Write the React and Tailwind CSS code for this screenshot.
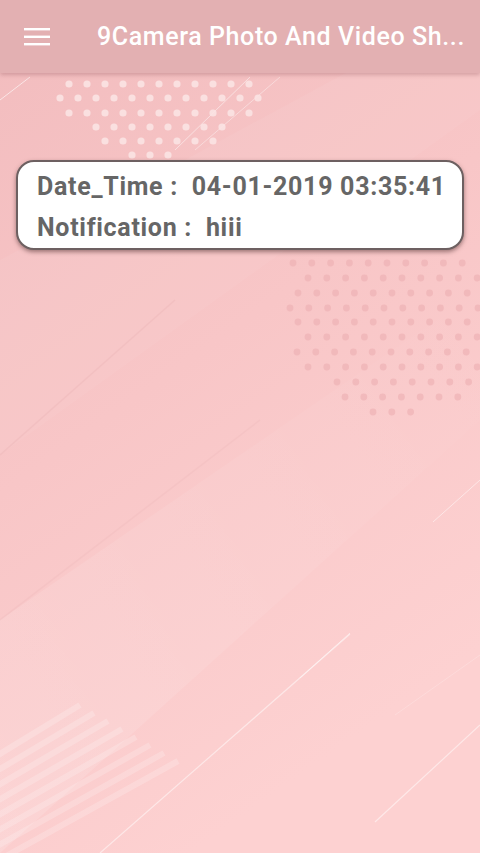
import React from 'react';

// dot rows: [y, xStart, xEnd]
const whiteDots = [
  [84, 69, 249],
  [98, 60, 258],
  [113, 69, 249],
  [127, 96, 222],
  [141, 105, 213],
  [155, 132, 168],
];

const pinkDots = [
  [263, 293, 473],
  [278, 308, 480],
  [293, 298, 480],
  [308, 290, 480],
  [322, 298, 480],
  [337, 308, 480],
  [352, 297, 480],
  [367, 308, 480],
  [382, 337, 470],
  [397, 345, 460],
  [412, 373, 412],
];

const dotsFor = (rows, step) =>
  rows.flatMap(([y, x0, x1]) => {
    const out = [];
    for (let x = x0; x <= x1 + 0.5; x += step) out.push([x, y]);
    return out;
  });

const Backdrop = () => (
  <svg className="absolute inset-0 w-full h-full" viewBox="0 0 480 853" preserveAspectRatio="none">
    <defs>
      <linearGradient id="bg" x1="0" y1="0" x2="0.4" y2="1">
        <stop offset="0" stopColor="#f2bcbe" />
        <stop offset="0.5" stopColor="#f8c6c7" />
        <stop offset="1" stopColor="#fdd1d1" />
      </linearGradient>
      <linearGradient id="band" x1="0" y1="1" x2="1" y2="0">
        <stop offset="0" stopColor="#ffffff" stopOpacity="0.14" />
        <stop offset="1" stopColor="#ffffff" stopOpacity="0" />
      </linearGradient>
    </defs>
    <rect width="480" height="853" fill="url(#bg)" />
    {/* soft diagonal bands */}
    <polygon points="0,455 480,110 480,0 0,260" fill="#ffffff" opacity="0.05" />
    <polygon points="0,620 480,290 480,420 0,853" fill="url(#band)" />
    <line x1="0" y1="455" x2="175" y2="300" stroke="#e8b0b2" strokeWidth="1.5" opacity="0.3" />
    <line x1="0" y1="620" x2="260" y2="420" stroke="#e8b0b2" strokeWidth="1.5" opacity="0.2" />
    {/* thin white lines */}
    <line x1="0" y1="100" x2="30" y2="77" stroke="#fff" strokeWidth="1" opacity="0.6" />
    <line x1="175" y1="150" x2="250" y2="77" stroke="#fff" strokeWidth="1" opacity="0.5" />
    <line x1="195" y1="150" x2="280" y2="77" stroke="#fff" strokeWidth="1" opacity="0.4" />
    <line x1="100" y1="853" x2="350" y2="634" stroke="#fff" strokeWidth="1.2" opacity="0.5" />
    <line x1="300" y1="678" x2="350" y2="633" stroke="#fff" strokeWidth="1" opacity="0.45" />
    <line x1="375" y1="822" x2="480" y2="725" stroke="#fff" strokeWidth="1.2" opacity="0.5" />
    <line x1="433" y1="522" x2="480" y2="480" stroke="#fff" strokeWidth="1" opacity="0.5" />
    <line x1="395" y1="715" x2="480" y2="655" stroke="#fff" strokeWidth="1" opacity="0.2" />
    {/* bottom-left stripes */}
    {[0, 1, 2, 3, 4, 5, 6, 7].map((i) => (
      <line
        key={i}
        x1={-10}
        y1={760 + i * 15}
        x2={80 + i * 14}
        y2={705 + i * 8}
        stroke="#fff"
        strokeWidth="6"
        opacity={0.2}
      />
    ))}
    {dotsFor(whiteDots, 18).map(([x, y], i) => (
      <circle key={'w' + i} cx={x} cy={y} r="3.6" fill="#fbe3e3" opacity="0.9" />
    ))}
    {dotsFor(pinkDots, 18.8).map(([x, y], i) => (
      <circle key={'p' + i} cx={x} cy={y} r="3.4" fill="#eeb2b5" opacity="0.7" />
    ))}
  </svg>
);

const MenuIcon = () => (
  <svg width="26" height="20" viewBox="0 0 26 20" className="shrink-0">
    <rect x="0" y="1" width="26" height="2.4" fill="#fff" />
    <rect x="0" y="8.6" width="26" height="2.4" fill="#fff" />
    <rect x="0" y="16" width="26" height="2.4" fill="#fff" />
  </svg>
);

export default function App() {
  return (
    <div
      className="relative w-full h-[853px] overflow-hidden"
      style={{ fontFamily: 'Roboto, "Liberation Sans", sans-serif' }}
    >
      <Backdrop />

      <header className="relative z-10 h-[73px] bg-[#e3b0b2] flex items-center pl-[24px] shadow-[0_2px_4px_rgba(150,90,95,0.35)]">
        <MenuIcon />
        <h1 className="ml-[47px] text-white text-[25px] tracking-[0.6px] font-medium whitespace-nowrap leading-none">
          9Camera Photo And Video Sh...
        </h1>
      </header>

      <main className="relative z-10 px-4 pt-[87px]">
        <div className="bg-white rounded-[18px] border-2 border-[#6d6061] shadow-[0_2px_4px_rgba(80,50,50,0.55)] pl-[19px] pt-[4px] text-[#666666] text-[25px] tracking-[0.7px] font-bold leading-[41px]">
          <div className="whitespace-nowrap">Date_Time :&nbsp; 04-01-2019 03:35:41</div>
          <div className="whitespace-nowrap">Notification :&nbsp; hiii</div>
        </div>
      </main>
    </div>
  );
}
